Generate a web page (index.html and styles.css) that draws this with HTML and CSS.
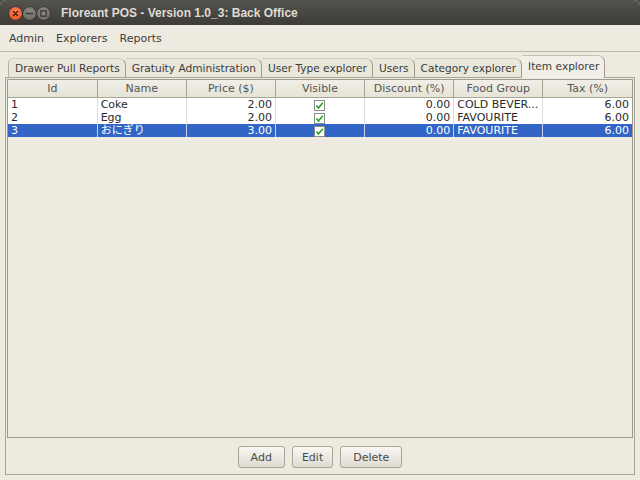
FILE: index.html
```html
<!DOCTYPE html>
<html lang="en">
<head>
  <meta charset="UTF-8">
  <title>Floreant POS - Version 1.0_3: Back Office</title>
  <link rel="stylesheet" href="styles.css">
</head>
<body>
  <div class="window">

    <!-- Title bar -->
    <div class="titlebar">
      <div class="win-buttons">
        <span class="win-btn close">
          <svg width="13" height="13" viewBox="0 0 13 13"><path d="M4.5 4.5 L8.5 8.5 M8.5 4.5 L4.5 8.5" stroke="#5a1a06" stroke-width="1.6" stroke-linecap="round"/></svg>
        </span>
        <span class="win-btn">
          <svg width="13" height="13" viewBox="0 0 13 13"><path d="M3.5 6.5 H9.5" stroke="#3b3a36" stroke-width="1.6" stroke-linecap="round"/></svg>
        </span>
        <span class="win-btn">
          <svg width="13" height="13" viewBox="0 0 13 13"><rect x="3.8" y="3.8" width="5.4" height="5.4" fill="none" stroke="#3b3a36" stroke-width="1.3"/></svg>
        </span>
      </div>
      <div class="title">Floreant POS - Version 1.0_3: Back Office</div>
    </div>

    <!-- Menu bar -->
    <div class="menubar">
      <span class="menu-item">Admin</span>
      <span class="menu-item">Explorers</span>
      <span class="menu-item">Reports</span>
    </div>

    <!-- Tabs -->
    <div class="tabs">
      <div class="tab first">Drawer Pull Reports</div>
      <div class="tab">Gratuity Administration</div>
      <div class="tab">User Type explorer</div>
      <div class="tab">Users</div>
      <div class="tab">Category explorer</div>
      <div class="tab active">Item explorer</div>
    </div>

    <!-- Tab content -->
    <div class="tab-panel">
      <div class="table-pane">
        <table class="items">
          <thead>
            <tr>
              <th>Id</th>
              <th>Name</th>
              <th>Price ($)</th>
              <th>Visible</th>
              <th>Discount (%)</th>
              <th>Food Group</th>
              <th>Tax (%)</th>
            </tr>
          </thead>
          <tbody>
            <tr>
              <td>1</td>
              <td>Coke</td>
              <td class="num">2.00</td>
              <td class="check"><span class="checkbox"><svg width="9" height="9" viewBox="0 0 9 9"><path d="M1.5 4.5 L3.5 7 L7.8 1.8" fill="none" stroke="#23a323" stroke-width="1.6"/></svg></span></td>
              <td class="num">0.00</td>
              <td>COLD BEVER...</td>
              <td class="num">6.00</td>
            </tr>
            <tr>
              <td>2</td>
              <td>Egg</td>
              <td class="num">2.00</td>
              <td class="check"><span class="checkbox"><svg width="9" height="9" viewBox="0 0 9 9"><path d="M1.5 4.5 L3.5 7 L7.8 1.8" fill="none" stroke="#23a323" stroke-width="1.6"/></svg></span></td>
              <td class="num">0.00</td>
              <td>FAVOURITE</td>
              <td class="num">6.00</td>
            </tr>
            <tr class="selected">
              <td>3</td>
              <td>おにぎり</td>
              <td class="num">3.00</td>
              <td class="check"><span class="checkbox"><svg width="9" height="9" viewBox="0 0 9 9"><path d="M1.5 4.5 L3.5 7 L7.8 1.8" fill="none" stroke="#23a323" stroke-width="1.6"/></svg></span></td>
              <td class="num">0.00</td>
              <td>FAVOURITE</td>
              <td class="num">6.00</td>
            </tr>
          </tbody>
        </table>
      </div>

      <div class="button-bar">
        <button class="btn">Add</button>
        <button class="btn btn-narrow">Edit</button>
        <button class="btn">Delete</button>
      </div>
    </div>

  </div>
</body>
</html>
```

FILE: styles.css
```css
/* General */
body {
  margin: 0;
  background-color: #4b4a46;
  font-family: "DejaVu Sans", "Noto Sans CJK JP", sans-serif;
  font-size: 11px;
  color: #3c3c3c;
}

.window {
  width: 640px;
  height: 480px;
  background-color: #edebe0;
  border-radius: 6px 6px 0 0;
  overflow: hidden;
  display: flex;
  flex-direction: column;
}

/* Title bar */
.titlebar {
  height: 25px;
  flex: none;
  display: flex;
  align-items: center;
  background: linear-gradient(#55534e, #3c3b37);
}

.win-buttons {
  display: flex;
  gap: 1px;
  padding-left: 9px;
  margin-top: 1px;
}

.win-btn {
  width: 13px;
  height: 13px;
  border-radius: 50%;
  background: radial-gradient(circle at 50% 35%, #8d8a83, #67645e);
  box-shadow: 0 0 0 0.5px #2e2d2a;
  display: flex;
}

.win-btn.close {
  background: radial-gradient(circle at 50% 35%, #f7895a, #e0481a);
}

.title {
  margin-left: 11px;
  font-family: "Liberation Sans", Arial, sans-serif;
  font-weight: bold;
  font-size: 12px;
  color: #dfdbd2;
}

/* Menu bar */
.menubar {
  height: 26px;
  flex: none;
  display: flex;
  align-items: center;
  padding-left: 3px;
  border-bottom: 1px solid #bcb8ac;
}

.menu-item {
  padding: 0 6px;
  font-size: 11px;
  color: #3c3c3c;
}

/* Tabs */
.tabs {
  height: 25px;
  flex: none;
  margin: 0 5px;
  padding-left: 3px;
  display: flex;
  align-items: flex-end;
  border-bottom: 1px solid #a9a597;
}

.tab {
  height: 18px;
  line-height: 18px;
  padding: 0 5px 0 6px;
  border-top: 1px solid #cfcbbf;
  border-right: 1px solid #9f9b8d;
  border-top-right-radius: 7px;
  background-color: #e9e6da;
  font-size: 10.6px;
  color: #3c3c3c;
  white-space: nowrap;
}

.tab.first {
  border-left: 1px solid #b3afa1;
  border-top-left-radius: 5px;
}

.tab.active {
  height: 22px;
  line-height: 21px;
  margin-bottom: -1px;
  border-top: 1px solid #c4c0b3;
  background-color: #f1efe7;
}

/* Tab content */
.tab-panel {
  flex: 1;
  margin: 0 5px 5px;
  padding: 1px;
  border: 1px solid #a9a597;
  border-top: none;
  display: flex;
  flex-direction: column;
}

.table-pane {
  height: 357px;
  border: 1px solid #9e9a8c;
  background-color: #edebe0;
}

.items {
  width: 100%;
  border-collapse: collapse;
  table-layout: fixed;
}

.items th {
  height: 17px;
  padding: 0;
  font-weight: normal;
  color: #555;
  background: linear-gradient(#f0eee6, #e6e3d7);
  border-right: 1px solid #a9a597;
  border-bottom: 1px solid #a9a597;
  text-align: center;
}

.items th:last-child {
  border-right: none;
}

.items td {
  height: 13px;
  line-height: 13px;
  padding: 0 3px;
  background-color: #fff;
  color: #2a2a2a;
  border-right: 1px solid #dcdcdc;
  white-space: nowrap;
  overflow: hidden;
}

.items td:last-child {
  border-right: none;
}

.items td.num {
  text-align: right;
}

.items td.check {
  text-align: center;
  padding: 0;
}

.checkbox {
  display: inline-flex;
  align-items: center;
  justify-content: center;
  width: 11px;
  height: 11px;
  box-sizing: border-box;
  border: 1px solid #8c8c8c;
  background-color: #fff;
  vertical-align: -2px;
}

.items tr.selected td {
  background-color: #3265c5;
  color: #fff;
  border-right-color: #c7d3ee;
}

/* Buttons */
.button-bar {
  display: flex;
  justify-content: center;
  gap: 7px;
  padding-top: 8px;
}

.btn {
  height: 22px;
  padding: 0 12px;
  font-family: "DejaVu Sans", sans-serif;
  font-size: 11px;
  color: #4a4a4a;
  background: linear-gradient(#f8f7f3, #dedbd0);
  border: 1px solid #a8a498;
  border-radius: 3px;
}

.btn-narrow {
  padding: 0 9px;
}
```
